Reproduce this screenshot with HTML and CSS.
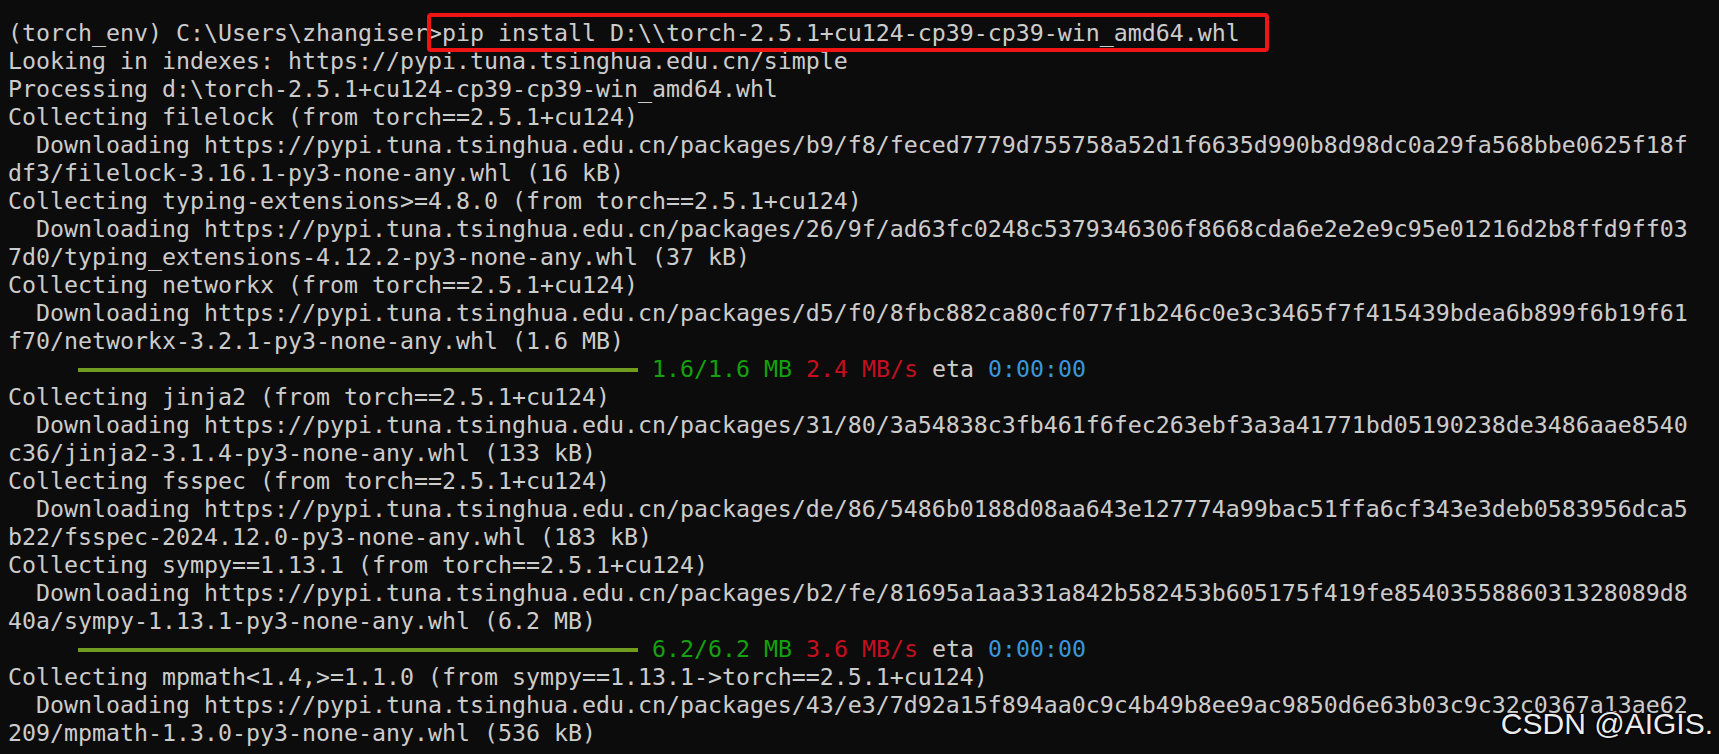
FILE: index.html
```html
<!DOCTYPE html>
<html>
<head>
<meta charset="utf-8">
<link rel="stylesheet" href="styles.css">
</head>
<body>
<div class="term">
<div class="ln">(torch_env) C:\Users\zhangiser&gt;<span class="cmd">pip install D:\\torch-2.5.1+cu124-cp39-cp39-win_amd64.whl</span></div>
<div class="ln">Looking in indexes: https://pypi.tuna.tsinghua.edu.cn/simple</div>
<div class="ln">Processing d:\torch-2.5.1+cu124-cp39-cp39-win_amd64.whl</div>
<div class="ln">Collecting filelock (from torch==2.5.1+cu124)</div>
<div class="ln">  Downloading https://pypi.tuna.tsinghua.edu.cn/packages/b9/f8/feced7779d755758a52d1f6635d990b8d98dc0a29fa568bbe0625f18f</div>
<div class="ln">df3/filelock-3.16.1-py3-none-any.whl (16 kB)</div>
<div class="ln">Collecting typing-extensions&gt;=4.8.0 (from torch==2.5.1+cu124)</div>
<div class="ln">  Downloading https://pypi.tuna.tsinghua.edu.cn/packages/26/9f/ad63fc0248c5379346306f8668cda6e2e2e9c95e01216d2b8ffd9ff03</div>
<div class="ln">7d0/typing_extensions-4.12.2-py3-none-any.whl (37 kB)</div>
<div class="ln">Collecting networkx (from torch==2.5.1+cu124)</div>
<div class="ln">  Downloading https://pypi.tuna.tsinghua.edu.cn/packages/d5/f0/8fbc882ca80cf077f1b246c0e3c3465f7f415439bdea6b899f6b19f61</div>
<div class="ln">f70/networkx-3.2.1-py3-none-any.whl (1.6 MB)</div>
<div class="ln">     <span class="bar"></span> <span class="g">1.6/1.6 MB</span> <span class="r">2.4 MB/s</span> eta <span class="c">0:00:00</span></div>
<div class="ln">Collecting jinja2 (from torch==2.5.1+cu124)</div>
<div class="ln">  Downloading https://pypi.tuna.tsinghua.edu.cn/packages/31/80/3a54838c3fb461f6fec263ebf3a3a41771bd05190238de3486aae8540</div>
<div class="ln">c36/jinja2-3.1.4-py3-none-any.whl (133 kB)</div>
<div class="ln">Collecting fsspec (from torch==2.5.1+cu124)</div>
<div class="ln">  Downloading https://pypi.tuna.tsinghua.edu.cn/packages/de/86/5486b0188d08aa643e127774a99bac51ffa6cf343e3deb0583956dca5</div>
<div class="ln">b22/fsspec-2024.12.0-py3-none-any.whl (183 kB)</div>
<div class="ln">Collecting sympy==1.13.1 (from torch==2.5.1+cu124)</div>
<div class="ln">  Downloading https://pypi.tuna.tsinghua.edu.cn/packages/b2/fe/81695a1aa331a842b582453b605175f419fe8540355886031328089d8</div>
<div class="ln">40a/sympy-1.13.1-py3-none-any.whl (6.2 MB)</div>
<div class="ln">     <span class="bar"></span> <span class="g">6.2/6.2 MB</span> <span class="r">3.6 MB/s</span> eta <span class="c">0:00:00</span></div>
<div class="ln">Collecting mpmath&lt;1.4,&gt;=1.1.0 (from sympy==1.13.1-&gt;torch==2.5.1+cu124)</div>
<div class="ln">  Downloading https://pypi.tuna.tsinghua.edu.cn/packages/43/e3/7d92a15f894aa0c9c4b49b8ee9ac9850d6e63b03c9c32c0367a13ae62</div>
<div class="ln">209/mpmath-1.3.0-py3-none-any.whl (536 kB)</div>
</div>
<div class="wm">CSDN @AIGIS.</div>
</body>
</html>
```

FILE: styles.css
```css
html, body {
  margin: 0;
  padding: 0;
  background: #0c0c0c;
  width: 1719px;
  height: 754px;
  overflow: hidden;
}
body {
  position: relative;
}
.term {
  padding: 19px 0 0 8px;
  font-family: "DejaVu Sans Mono", "Liberation Mono", monospace;
  font-size: 23.25px;
  line-height: 28px;
  color: #cccccc;
}
.ln {
  white-space: pre;
  height: 28px;
}
.cmd {
  display: inline-block;
  position: relative;
  height: 28px;
}
.cmd::after {
  content: "";
  position: absolute;
  left: -15px;
  right: -29px;
  top: -6px;
  bottom: -5px;
  border: 4px solid #f01414;
  border-radius: 4px;
}
.bar {
  display: inline-block;
  width: 560px;
  height: 4px;
  background: #729c1f;
  vertical-align: middle;
  position: relative;
  top: -1px;
}
.g { color: #13a10e; }
.r { color: #c50f1f; }
.c { color: #3a96dd; }
.wm {
  position: absolute;
  right: 6px;
  top: 709px;
  font-family: "Liberation Sans", Arial, sans-serif;
  font-size: 30px;
  line-height: 30px;
  color: #ececec;
  text-shadow: 0 0 1px #000, 1px 1px 1px #000, -1px -1px 1px #000;
}
```
